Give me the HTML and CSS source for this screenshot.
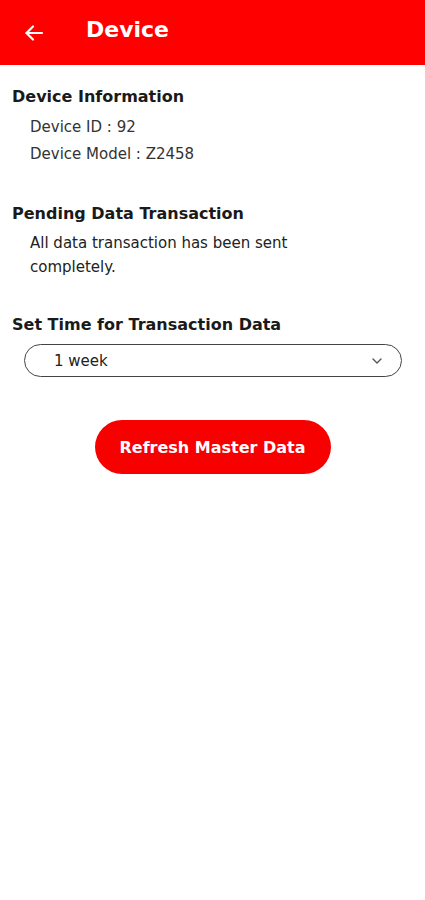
FILE: index.html
```html
<!DOCTYPE html>
<html lang="en">
<head>
    <meta charset="UTF-8">
    <meta name="viewport" content="width=device-width, initial-scale=1.0">
    <title>Device</title>
    <link rel="stylesheet" href="styles.css">
</head>
<body>
    <header class="topbar">
        <button class="back-btn" aria-label="Back">
            <svg width="24" height="24" viewBox="0 0 24 24" fill="none" stroke="#fff" stroke-width="2.2" stroke-linecap="round" stroke-linejoin="round">
                <path d="M20 12H4.5"/>
                <path d="M11 5.5L4.5 12L11 18.5"/>
            </svg>
        </button>
        <h1 class="title">Device</h1>
    </header>

    <main class="content">
        <section class="section">
            <h2 class="section-title">Device Information</h2>
            <p class="info-line">Device ID : 92</p>
            <p class="info-line">Device Model : Z2458</p>
        </section>

        <section class="section">
            <h2 class="section-title">Pending Data Transaction</h2>
            <p class="info-text">All data transaction has been sent completely.</p>
        </section>

        <section class="section">
            <h2 class="section-title">Set Time for Transaction Data</h2>
            <div class="select-box">
                <span class="select-value">1 week</span>
                <svg width="14" height="14" viewBox="0 0 14 14" fill="none" stroke="#555" stroke-width="1.4" stroke-linecap="round" stroke-linejoin="round">
                    <path d="M3 5l4 4 4-4"/>
                </svg>
            </div>
        </section>

        <div class="action">
            <button class="refresh-btn">Refresh Master Data</button>
        </div>
    </main>
</body>
</html>
```

FILE: styles.css
```css
* { box-sizing: border-box; }
body { margin: 0; font-family: "DejaVu Sans", "Open Sans", sans-serif; background: #fff; color: #1a1a1a; }

.topbar { height: 65px; background: #fe0000; display: flex; align-items: center; padding-left: 22px; }
.back-btn { background: none; border: none; padding: 0; width: 24px; height: 24px; display: flex; }
.title { margin: 0 0 6px 40px; color: #fff; font-size: 22px; font-weight: 700; }

.content { padding: 21px 12px 0 12px; }
.section { margin-bottom: 35px; }
.section:last-of-type { margin-bottom: 0; }
.section-title { margin: 0 0 6px 0; font-size: 16px; line-height: 22px; font-weight: 700; color: #1a1a1a; }
.info-line { margin: 0; padding-left: 18px; font-size: 15px; line-height: 27px; color: #333; }
.info-text { margin: 0; padding-left: 18px; padding-right: 90px; font-size: 15px; line-height: 24px; color: #222; }

.select-box { margin: 8px 11px 0 12px; height: 33px; border: 1px solid #444; border-radius: 17px; display: flex; align-items: center; justify-content: space-between; padding: 0 17px 0 29px; }
.select-value { font-size: 15px; color: #222; }

.action { display: flex; justify-content: center; margin-top: 43px; }
.refresh-btn { width: 236px; height: 54px; border: none; border-radius: 27px; background: #f70000; color: #fff; font-family: inherit; font-size: 16px; font-weight: 700; }
```
